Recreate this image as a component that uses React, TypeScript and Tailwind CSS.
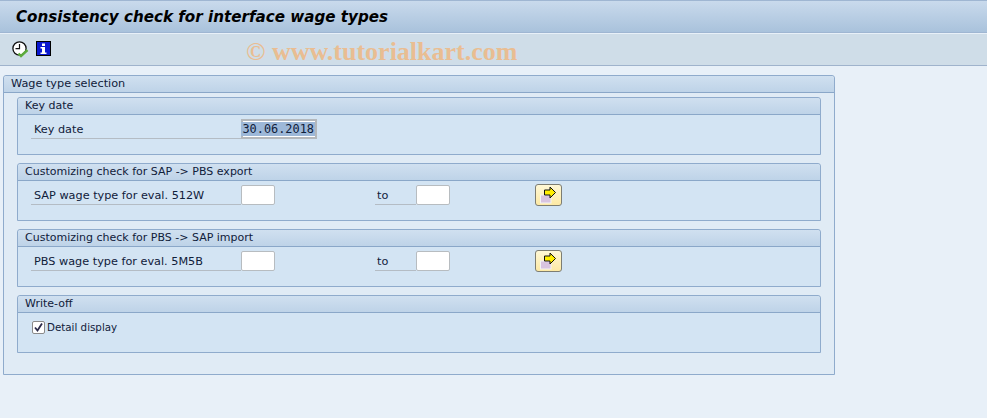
const labelFont = "font-['DejaVu_Sans',sans-serif] text-[11.25px] text-[#10203a]"
const headerFont = "font-['DejaVu_Sans',sans-serif] text-[11px] text-[#10203a]"

function GroupHeader({ title }: { title: string }) {
  return (
    <div className={`flex h-[17px] items-center rounded-t-[3px] border-b border-[#8aa7c8] bg-gradient-to-b from-[#d0e0f0] to-[#bed3e8] pl-[7px] pt-[1px] ${headerFont}`}>
      {title}
    </div>
  )
}

function FieldLabel({ text, width, inset = "pl-[3px]" }: { text: string; width: string; inset?: string }) {
  return (
    <div className={`flex h-[20px] items-center border-b border-[#b4bcc4] pt-[3px] ${inset} ${width} ${labelFont}`}>
      {text}
    </div>
  )
}

function TextBox() {
  return <div className="h-[20px] w-[34px] rounded-[2px] border border-[#b7bcc0] bg-white" />
}

function ArrowButton() {
  return (
    <button className="flex h-[22px] w-[27px] items-center justify-center rounded-[3px] border border-[#7d7d72] bg-gradient-to-b from-[#fff8d6] to-[#fde9a4]">
      <svg width="18" height="18" viewBox="0 0 18 18">
        <rect x="0.5" y="9" width="10.5" height="8" fill="#d8c4e0" stroke="#f4f4f4" strokeWidth="1" />
        <path d="M4.5 4H10V1l5.5 5.5L10 12V9H4.5z" fill="#ffee00" stroke="#111" strokeWidth="1" />
      </svg>
    </button>
  )
}

function RangeRow({ label }: { label: string }) {
  return (
    <div className="flex h-[22px] items-center pl-[13px]">
      <FieldLabel text={label} width="w-[210px]" />
      <TextBox />
      <div className="ml-[100px]">
        <FieldLabel text="to" width="w-[41px]" inset="pl-[2px]" />
      </div>
      <TextBox />
      <div className="ml-[85px]">
        <ArrowButton />
      </div>
    </div>
  )
}

function Group({ title, children }: { title: string; children: React.ReactNode }) {
  return (
    <section className="h-[58px] rounded-t-[3px] border border-[#8fabcc] bg-[#d3e4f3]">
      <GroupHeader title={title} />
      <div className="pt-[3px]">{children}</div>
    </section>
  )
}

export default function App() {
  return (
    <div className="relative h-[418px] w-[987px] overflow-hidden bg-[#e8f0f8]">
      <header className="flex h-[33px] items-center border-y border-[#9fb6d2] bg-gradient-to-b from-[#c9daec] to-[#a9c2dc] pl-[16px] pt-[2px]">
        <h1 className="font-['DejaVu_Sans',sans-serif] text-[15.15px] font-bold italic text-black">
          Consistency check for interface wage types
        </h1>
      </header>
      <div className="flex h-[33px] items-start gap-[6px] border-y border-[#9fb3cc] bg-[#cfdde8] pl-[12px] pt-[7px] border-t-[#e8f0f8]">
        <svg width="18" height="18" viewBox="0 0 18 18">
          <circle cx="7.5" cy="7.5" r="6.6" fill="#fff" stroke="#111" strokeWidth="1.3" />
          <path d="M7.5 3v4.7H3.5" fill="none" stroke="#111" strokeWidth="1.2" />
          <path d="M6.5 12.5l2.5 2.5 6.5-6" fill="none" stroke="#5cab3c" strokeWidth="2.4" />
        </svg>
        <svg width="15" height="15" viewBox="0 0 15 15">
          <rect x="0.5" y="0.5" width="14" height="14" fill="#0a18d0" stroke="#000" />
          <rect x="6" y="2.5" width="3" height="2.5" fill="#fff" />
          <path d="M4.5 6h4.5v5.5h1.5v1.5h-6v-1.5H6V7.5H4.5z" fill="#fff" />
        </svg>
      </div>
      <div className="absolute left-[246px] top-[38px] font-['Liberation_Serif',serif] text-[26px] font-bold leading-[28px] text-[#e9bd92]">
        © www.tutorialkart.com
      </div>
      <main className="ml-[3px] mt-[9px] h-[300px] w-[832px] rounded-t-[3px] border border-[#8fabcc] bg-[#e0ebf5]">
        <div className={`flex h-[17px] items-center rounded-t-[3px] border-b border-[#8aa7c8] bg-gradient-to-b from-[#d0e0f0] to-[#bed3e8] pl-[7px] pt-[1px] ${labelFont}`}>
          Wage type selection
        </div>
        <div className="ml-[13px] flex w-[804px] flex-col gap-[8px] pt-[4px]">
          <Group title="Key date">
            <div className="flex h-[22px] items-center pl-[13px]">
              <FieldLabel text="Key date" width="w-[210px]" />
              <div className="flex h-[20px] w-[76px] items-center justify-end border-2 border-[#b4b8bc] bg-white">
                <span className="bg-[#9db8d8] px-[1px] font-['DejaVu_Sans_Mono',monospace] text-[11.9px] leading-[14px] text-[#10203a]">
                  30.06.2018
                </span>
              </div>
            </div>
          </Group>
          <Group title="Customizing check for SAP -> PBS export">
            <RangeRow label="SAP wage type for eval. 512W" />
          </Group>
          <Group title="Customizing check for PBS -> SAP import">
            <RangeRow label="PBS wage type for eval. 5M5B" />
          </Group>
          <Group title="Write-off">
            <label className="flex h-[20px] items-center gap-[2px] pl-[14px] pt-[3px]">
              <span className="flex h-[13px] w-[13px] items-center justify-center rounded-[2px] border border-[#8a8a8a] bg-white">
                <svg width="11" height="11" viewBox="0 0 11 11">
                  <path d="M2 5.5l2.5 3L9 1.5" fill="none" stroke="#2a2a4a" strokeWidth="1.8" />
                </svg>
              </span>
              <span className="font-['DejaVu_Sans',sans-serif] text-[10.3px] text-[#10203a]">Detail display</span>
            </label>
          </Group>
        </div>
      </main>
    </div>
  )
}
